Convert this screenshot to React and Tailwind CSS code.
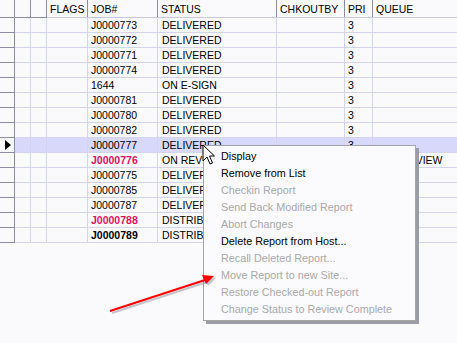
import React from "react";

const rows = [
  { job: "J0000773", status: "DELIVERED" },
  { job: "J0000772", status: "DELIVERED" },
  { job: "J0000771", status: "DELIVERED" },
  { job: "J0000774", status: "DELIVERED" },
  { job: "1644", status: "ON E-SIGN" },
  { job: "J0000781", status: "DELIVERED" },
  { job: "J0000780", status: "DELIVERED" },
  { job: "J0000782", status: "DELIVERED" },
  { job: "J0000777", status: "DELIVERED", selected: true },
  { job: "J0000776", status: "ON REVIEW", red: true, queue: "FOR REVIEW" },
  { job: "J0000775", status: "DELIVERED" },
  { job: "J0000785", status: "DELIVERED" },
  { job: "J0000787", status: "DELIVERED" },
  { job: "J0000788", status: "DISTRIBUTED", red: true },
  { job: "J0000789", status: "DISTRIBUTED", bold: true },
];

const menu = [
  ["Display", true],
  ["Remove from List", true],
  ["Checkin Report", false],
  ["Send Back Modified Report", false],
  ["Abort Changes", false],
  ["Delete Report from Host...", true],
  ["Recall Deleted Report...", false],
  ["Move Report to new Site...", false],
  ["Restore Checked-out Report", false],
  ["Change Status to Review Complete", false],
];

export default function App() {
  return (
    <div
      className="relative w-[457px] h-[343px] overflow-hidden bg-[#fafafd] text-[10.5px] leading-none text-black"
      style={{ fontFamily: '"Liberation Sans", Arial, sans-serif' }}
    >
      {/* header */}
      <div className="flex h-[18px] border-b border-[#c8c8e0]">
        <div className="w-[15px] shrink-0 border-r border-b border-[#8c8ca4] -mb-px" />
        <div className="w-[16px] shrink-0 border-r border-b border-[#8c8ca4] -mb-px" />
        <div className="w-[16px] shrink-0 border-r border-b border-[#8c8ca4] -mb-px" />
        <div className="w-[41px] shrink-0 border-r border-[#8c8ca4] pl-[3px] pt-[4px]">FLAGS</div>
        <div className="w-[70px] shrink-0 border-r border-[#8c8ca4] pl-[3px] pt-[4px]">JOB#</div>
        <div className="w-[119px] shrink-0 border-r border-[#8c8ca4] pl-[3px] pt-[4px]">STATUS</div>
        <div className="w-[68px] shrink-0 border-r border-[#8c8ca4] pl-[3px] pt-[4px]">CHKOUTBY</div>
        <div className="w-[28px] shrink-0 border-r border-[#8c8ca4] pl-[3px] pt-[4px]">PRI</div>
        <div className="flex-1 pl-[3px] pt-[4px]">QUEUE</div>
      </div>
      {/* rows */}
      {rows.map((r, i) => (
        <div key={i} className="flex h-[15px]">
          <div className="w-[15px] shrink-0 border-r border-b border-[#8c8ca4] flex items-center pl-[5px]">
            {r.selected && (
              <svg width="6" height="10" viewBox="0 0 6 10">
                <path d="M0 0 L6 5 L0 10 Z" fill="#000" />
              </svg>
            )}
          </div>
          <div className={`flex flex-1 border-b border-[#d4d4ec] ${r.selected ? "bg-[#d8d8fa]" : ""}`}>
            <div className="w-[16px] shrink-0 border-r border-[#d4d4ec]" />
            <div className="w-[16px] shrink-0 border-r border-[#d4d4ec]" />
            <div className="w-[41px] shrink-0 border-r border-[#d4d4ec]" />
            <div
              className={`w-[70px] shrink-0 border-r border-[#d4d4ec] pl-[3px] pt-[2px] ${
                r.red ? "font-bold text-[#e0105c]" : r.bold ? "font-bold" : ""
              }`}
            >
              {r.job}
            </div>
            <div className="w-[119px] shrink-0 border-r border-[#d4d4ec] pl-[4px] pt-[2px]">{r.status}</div>
            <div className="w-[68px] shrink-0 border-r border-[#d4d4ec]" />
            <div className="w-[28px] shrink-0 border-r border-[#d4d4ec] pl-[3px] pt-[2px]">3</div>
            <div className="flex-1 pl-[3px] pt-[2px] whitespace-nowrap">{r.queue || ""}</div>
          </div>
        </div>
      ))}

      {/* context menu */}
      <div className="absolute left-[203px] top-[145px] w-[213px] border border-[#a4a4a4] bg-[#fbfbfd] pt-[2px] pb-[2px] shadow-[3px_3px_0_#9c9ca6]">
        {menu.map(([t, en], i) => (
          <div
            key={i}
            className={`h-[17px] pl-[17px] flex items-center text-[10.8px] whitespace-nowrap ${
              en ? "text-black" : "text-[#a9a9a9]"
            }`}
          >
            {t}
          </div>
        ))}
      </div>

      {/* mouse cursor */}
      <svg className="absolute left-[202px] top-[144px]" width="14" height="22" viewBox="0 0 14 22">
        <path
          d="M1 1 L1 17 L5 13 L8 20 L10.5 19 L7.5 12 L12.5 12 Z"
          fill="#fff"
          stroke="#000"
          strokeWidth="1"
          strokeLinejoin="miter"
        />
      </svg>

      {/* red arrow */}
      <svg className="absolute left-0 top-0" width="457" height="343" viewBox="0 0 457 343">
        <g transform="translate(2,2)" opacity="0.35">
          <line x1="110" y1="311" x2="205" y2="280" stroke="#666" strokeWidth="2" />
          <path d="M214 276 L202 275 L206 284 Z" fill="#666" />
        </g>
        <line x1="110" y1="311" x2="205" y2="280" stroke="#ff0000" strokeWidth="2" />
        <path d="M214 276 L202 275 L206 284 Z" fill="#ff0000" />
      </svg>
    </div>
  );
}
